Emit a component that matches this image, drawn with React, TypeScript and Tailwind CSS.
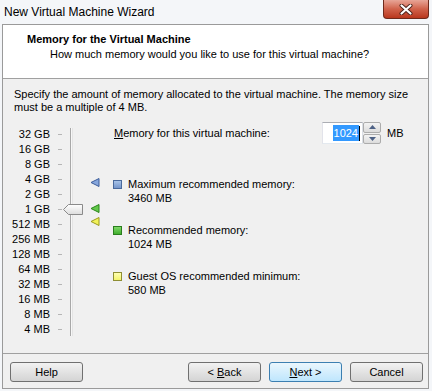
import React from 'react';

const font = { fontFamily: '"Liberation Sans", Arial, sans-serif' };

const levels = ['32 GB', '16 GB', '8 GB', '4 GB', '2 GB', '1 GB', '512 MB', '256 MB', '128 MB', '64 MB', '32 MB', '16 MB', '8 MB', '4 MB'];

function Marker({ fill, stroke, className }: { fill: string; stroke: string; className: string }) {
  return (
    <svg width="10" height="9" viewBox="0 0 10 9" className={`absolute ${className}`}>
      <polygon points="1,4.5 9,0.5 9,8.5" fill={fill} stroke={stroke} strokeWidth="1" strokeLinejoin="round" />
    </svg>
  );
}

function Slider() {
  return (
    <div className="relative -ml-[3px] w-[102px] shrink-0 pt-[5px]">
      {levels.map((l) => (
        <div key={l} className="flex h-[15px] items-center">
          <span className="w-[39px] whitespace-nowrap text-right leading-[15px]">{l}</span>
          <span className="ml-[8px] h-px w-[4px] bg-[#b5b5b5]" />
        </div>
      ))}
      {/* track */}
      <div className="absolute left-[59px] top-[6px] h-[208px] w-[3px] border-l border-r border-l-[#a8a8a8] border-r-[#e4e4e4] bg-[#f7f7f7]" />
      {/* thumb */}
      <svg width="21" height="11" viewBox="0 0 21 11" className="absolute left-[52px] top-[82px]">
        <defs>
          <linearGradient id="thumb" x1="0" y1="0" x2="0" y2="1">
            <stop offset="0" stopColor="#ffffff" />
            <stop offset="1" stopColor="#dcdcdc" />
          </linearGradient>
        </defs>
        <polygon points="0.5,5.5 5.5,0.5 19.5,0.5 19.5,10.5 5.5,10.5" fill="url(#thumb)" stroke="#8a8a8a" strokeWidth="1" strokeLinejoin="round" />
      </svg>
      <Marker fill="#86a6dc" stroke="#3d5c9a" className="left-[79px] top-[56px]" />
      <Marker fill="#62c84a" stroke="#2a861b" className="left-[79px] top-[82px]" />
      <Marker fill="#f2f25a" stroke="#9a9a1e" className="left-[79px] top-[95px]" />
    </div>
  );
}

function Legend({ sq, border, label, value, className }: { sq: string; border: string; label: string; value: string; className: string }) {
  return (
    <div className={`flex ${className}`}>
      <div className="flex h-[14px] items-center">
        <span className={`h-[9px] w-[9px] border ${sq} ${border}`} />
      </div>
      <div className="ml-[6px] leading-[14px]">
        <div>{label}</div>
        <div>{value}</div>
      </div>
    </div>
  );
}

function Btn({ children, primary }: { children: React.ReactNode; primary?: boolean }) {
  return (
    <div
      className={`flex h-[20px] w-[73px] items-center justify-center rounded-[3px] border text-[11px] ${
        primary
          ? 'border-[#3c7fb1] bg-gradient-to-b from-[#eaf6fd] to-[#bee6fd]'
          : 'border-[#707070] bg-gradient-to-b from-[#f2f2f2] to-[#d4d4d4]'
      }`}
    >
      {children}
    </div>
  );
}

export default function App() {
  return (
    <div className="h-[391px] w-[432px] overflow-hidden bg-[#f4f6f9] text-[11px] text-black" style={font}>
      {/* Title bar */}
      <div className="flex h-[24px] items-start">
        <span className="ml-[4px] mt-[5px] text-[12px] leading-[15px]">New Virtual Machine Wizard</span>
        <div className="ml-auto mr-[3px] flex h-[19px] w-[46px] items-center justify-center rounded-b-[4px] border border-t-0 border-[#6e2a1c] bg-gradient-to-b from-[#e7a597] via-[#d0624b] to-[#b9361c]">
          <svg width="14" height="11" viewBox="0 0 14 11">
            <path d="M2.5 1.5 L11.5 9.5 M11.5 1.5 L2.5 9.5" stroke="#4a2018" strokeWidth="4" strokeLinecap="round" />
            <path d="M2.5 1.5 L11.5 9.5 M11.5 1.5 L2.5 9.5" stroke="#ffffff" strokeWidth="2.2" strokeLinecap="round" />
          </svg>
        </div>
      </div>

      {/* Client area */}
      <div className="ml-[2px] w-[427px] border border-[#9a9a9a] bg-[#f0f0f0]">
        {/* Header */}
        <div className="h-[54px] border-b border-[#a0a0a0] bg-white pt-[8px]">
          <div className="ml-[24px] font-bold leading-[13px]">Memory for the Virtual Machine</div>
          <div className="ml-[47px] mt-[2px] leading-[13px]">How much memory would you like to use for this virtual machine?</div>
        </div>

        {/* Body */}
        <div className="h-[274px] pl-[11px] pt-[9px]">
          <p className="leading-[13px]">
            Specify the amount of memory allocated to the virtual machine. The memory size
            <br />
            must be a multiple of 4 MB.
          </p>
          <div className="mt-[8px] flex">
            <Slider />
            <div className="flex flex-col">
              <div className="flex h-[22px] items-center">
                <span className="w-[209px] pl-px">
                  <span className="underline">M</span>emory for this virtual machine:
                </span>
                <div className="flex h-[22px] w-[41px] items-center justify-end border border-[#abadb3] border-b-[#e3e9ef] border-l-[#e2e3ea] border-r-[#dbdfe6] bg-white pr-[2px]">
                  <span className="bg-[#3399ff] px-[1px] leading-[16px] text-white">1024</span>
                  <span className="h-[15px] w-px bg-black" />
                </div>
                <div className="flex h-[22px] w-[18px] flex-col gap-px">
                  {[0, 1].map((i) => (
                    <div key={i} className="flex flex-1 items-center justify-center rounded-[2px] border border-[#acacac] bg-gradient-to-b from-[#f3f3f3] to-[#dcdcdc]">
                      <svg width="7" height="4" viewBox="0 0 7 4">
                        <polygon points={i === 0 ? '0,4 3.5,0 7,4' : '0,0 3.5,4 7,0'} fill="#4d6185" />
                      </svg>
                    </div>
                  ))}
                </div>
                <span className="ml-[6px]">MB</span>
              </div>
              <Legend className="mt-[33px]" sq="bg-gradient-to-b from-[#a9c3e8] to-[#7596cb]" border="border-[#4a6a9c]" label="Maximum recommended memory:" value="3460 MB" />
              <Legend className="mt-[18px]" sq="bg-gradient-to-b from-[#7ed867] to-[#3fae2c]" border="border-[#2a7d1e]" label="Recommended memory:" value="1024 MB" />
              <Legend className="mt-[18px]" sq="bg-gradient-to-b from-[#ffffb0] to-[#f4f46a]" border="border-[#8e8e34]" label="Guest OS recommended minimum:" value="580 MB" />
            </div>
          </div>
        </div>

        {/* Footer */}
        <div className="flex h-[35px] border-t border-[#a0a0a0] pl-[7px] pr-[5px] pt-[8px]">
          <Btn>Help</Btn>
          <div className="ml-auto flex gap-[8px]">
            <Btn>
              &lt;&nbsp;<span className="underline">B</span>ack
            </Btn>
            <Btn primary>
              <span className="underline">N</span>ext &gt;
            </Btn>
            <Btn>Cancel</Btn>
          </div>
        </div>
      </div>
    </div>
  );
}
